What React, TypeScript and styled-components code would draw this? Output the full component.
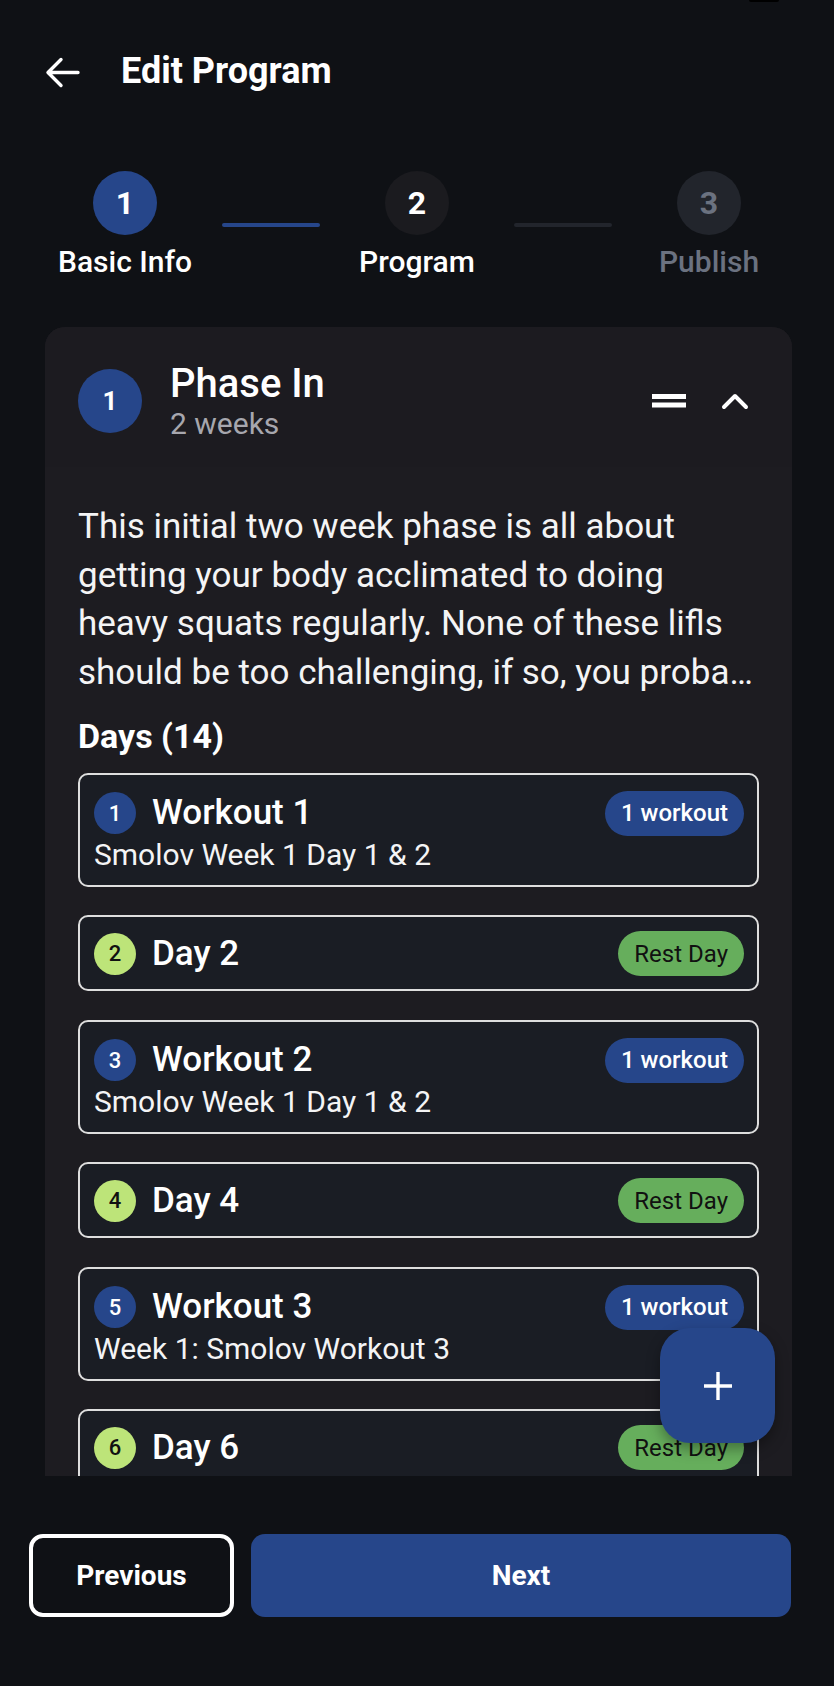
import React from "react";
import styled, { createGlobalStyle } from "styled-components";

const GlobalStyle = createGlobalStyle`
  html, body {
    margin: 0;
    padding: 0;
    background: #0f1115;
  }
  body {
    font-family: Roboto, "Noto Sans", "Liberation Sans", sans-serif;
    color: #ffffff;
  }
  * { box-sizing: border-box; }
`;

const BLUE = "#26468a";

const Screen = styled.div`
  position: relative;
  width: 834px;
  height: 1686px;
  overflow: hidden;
  background: #0f1115;
  display: flex;
  flex-direction: column;
`;

const StatusNotch = styled.div`
  position: absolute;
  top: 0;
  right: 55px;
  width: 30px;
  height: 2px;
  background: #000;
  border-radius: 0 0 2px 2px;
`;

const Header = styled.header`
  height: 142px;
  flex: none;
  display: flex;
  align-items: center;
  padding-left: 45px;
  gap: 41px;
`;

const BackButton = styled.button`
  width: 35px;
  height: 34px;
  padding: 0;
  border: none;
  background: transparent;
  color: #fff;
  display: flex;
  align-items: center;
  justify-content: center;
  margin-top: 2px;
`;

const Title = styled.h1`
  margin: 0;
  font-size: 36px;
  line-height: 42px;
  font-weight: 700;
  color: #fff;
`;

const Stepper = styled.nav`
  flex: none;
  display: flex;
  justify-content: center;
  padding-top: 29px;
`;

const Step = styled.div`
  width: 140px;
  display: flex;
  flex-direction: column;
  align-items: center;
`;

const StepCircle = styled.div<{ $state: "done" | "active" | "todo" }>`
  width: 64px;
  height: 64px;
  border-radius: 50%;
  display: flex;
  align-items: center;
  justify-content: center;
  font-size: 32px;
  font-weight: 700;
  background: ${(p) =>
    p.$state === "done" ? BLUE : p.$state === "active" ? "#1b1b1f" : "#22252c"};
  color: ${(p) => (p.$state === "todo" ? "#6b7280" : "#ffffff")};
`;

const StepLabel = styled.div<{ $muted?: boolean }>`
  margin-top: 10px;
  font-size: 30px;
  line-height: 34px;
  font-weight: 500;
  white-space: nowrap;
  color: ${(p) => (p.$muted ? "#6b7280" : "#ffffff")};
`;

const ConnectorSlot = styled.div`
  width: 152px;
  display: flex;
  justify-content: center;
  padding-top: 52px;
`;

const Connector = styled.div<{ $done?: boolean }>`
  width: 98px;
  height: 4px;
  border-radius: 2px;
  background: ${(p) => (p.$done ? BLUE : "#22252c")};
`;

const Main = styled.main`
  flex: 1;
  min-height: 0;
  overflow: hidden;
  padding: 48px 42px 0 45px;
`;

const PhaseCard = styled.section`
  background: #1c1b20;
  border-radius: 20px 20px 0 0;
`;

const PhaseHeader = styled.div`
  height: 140px;
  display: flex;
  align-items: center;
  padding: 8px 43px 0 33px;
  background: #1c1b20;
  border-radius: 20px 20px 0 0;
`;

const PhaseBadge = styled.div`
  width: 64px;
  height: 64px;
  flex: none;
  border-radius: 50%;
  background: ${BLUE};
  display: flex;
  align-items: center;
  justify-content: center;
  font-size: 26px;
  font-weight: 700;
  color: #fff;
`;

const PhaseText = styled.div`
  flex: 1;
  margin-left: 28px;
  display: flex;
  flex-direction: column;
`;

const PhaseTitle = styled.div`
  font-size: 40px;
  line-height: 45px;
  font-weight: 500;
  color: #fff;
`;

const PhaseSub = styled.div`
  font-size: 30px;
  line-height: 36px;
  color: #a7a7ae;
`;

const IconButton = styled.button`
  border: none;
  background: transparent;
  padding: 0;
  color: #fff;
  display: flex;
  align-items: center;
  justify-content: center;
`;

const PhaseActions = styled.div`
  display: flex;
  align-items: center;
  gap: 35px;
`;

const PhaseBody = styled.div`
  background: #1d1c21;
  padding: 36px 33px 40px 33px;
`;

const Description = styled.p`
  margin: 0;
  font-size: 35px;
  line-height: 48.7px;
  color: #f4f4f5;
`;

const DescHead = styled.span`
  display: block;
`;

const DescTail = styled.span`
  display: block;
  white-space: nowrap;
  overflow: hidden;
  text-overflow: ellipsis;
`;

const DaysLabel = styled.h3`
  margin: 18px 0 17px;
  font-size: 34px;
  line-height: 40px;
  font-weight: 700;
  color: #fff;
`;

const DayList = styled.div`
  display: flex;
  flex-direction: column;
  gap: 28.5px;
`;

const DayItem = styled.div<{ $rest?: boolean }>`
  border: 2px solid #dedede;
  border-radius: 10px;
  background: #1a1d24;
  padding: ${(p) => (p.$rest ? "14px 13px 13px 14px" : "16px 13px 13px 14px")};
`;

const DayRow = styled.div`
  height: 45px;
  display: flex;
  align-items: center;
`;

const DayNumber = styled.div<{ $rest?: boolean }>`
  width: 42px;
  height: 42px;
  flex: none;
  border-radius: 50%;
  display: flex;
  align-items: center;
  justify-content: center;
  font-size: 22px;
  font-weight: 500;
  background: ${(p) => (p.$rest ? "#bde479" : BLUE)};
  color: ${(p) => (p.$rest ? "#111" : "#fff")};
`;

const DayTitle = styled.div`
  flex: 1;
  margin-left: 16px;
  font-size: 35px;
  line-height: 40px;
  font-weight: 500;
  color: #fff;
`;

const Pill = styled.div<{ $rest?: boolean }>`
  height: 45px;
  padding: 0 16px;
  border-radius: 23px;
  display: flex;
  align-items: center;
  font-size: 24px;
  font-weight: ${(p) => (p.$rest ? 400 : 500)};
  background: ${(p) => (p.$rest ? "#66ae5c" : BLUE)};
  color: ${(p) => (p.$rest ? "#111" : "#fff")};
`;

const DaySub = styled.div`
  margin-top: 2px;
  font-size: 30px;
  line-height: 34px;
  color: #f4f4f5;
`;

const Footer = styled.footer`
  flex: none;
  height: 210px;
  display: flex;
  gap: 17px;
  padding: 58px 43px 0 29px;
`;

const FooterButton = styled.button<{ $primary?: boolean }>`
  height: 83px;
  border-radius: 14px;
  font-family: inherit;
  font-size: 28px;
  font-weight: 700;
  color: #fff;
  background: ${(p) => (p.$primary ? BLUE : "transparent")};
  border: ${(p) => (p.$primary ? "none" : "4px solid #ffffff")};
  width: ${(p) => (p.$primary ? "auto" : "205px")};
  flex: ${(p) => (p.$primary ? 1 : "none")};
`;

const Fab = styled.button`
  position: absolute;
  right: 59px;
  bottom: 243px;
  width: 115px;
  height: 115px;
  border-radius: 30px;
  border: none;
  background: ${BLUE};
  color: #fff;
  display: flex;
  align-items: center;
  justify-content: center;
  box-shadow: 0 6px 14px rgba(0, 0, 0, 0.35);
`;

type Day =
  | { n: number; kind: "workout"; title: string; sub: string }
  | { n: number; kind: "rest"; title: string };

const days: Day[] = [
  { n: 1, kind: "workout", title: "Workout 1", sub: "Smolov Week 1 Day 1 & 2" },
  { n: 2, kind: "rest", title: "Day 2" },
  { n: 3, kind: "workout", title: "Workout 2", sub: "Smolov Week 1 Day 1 & 2" },
  { n: 4, kind: "rest", title: "Day 4" },
  { n: 5, kind: "workout", title: "Workout 3", sub: "Week 1: Smolov Workout 3" },
  { n: 6, kind: "rest", title: "Day 6" },
  { n: 7, kind: "workout", title: "Workout 4", sub: "Week 1: Smolov Workout 4" },
  { n: 8, kind: "rest", title: "Day 8" },
];

const ArrowLeft = () => (
  <svg width="35" height="31" viewBox="0 0 35 31" fill="none">
    <path
      d="M33 15.5H3M16 2.5L3 15.5L16 28.5"
      stroke="currentColor"
      strokeWidth="3.4"
      strokeLinecap="round"
      strokeLinejoin="round"
    />
  </svg>
);

const DragHandle = () => (
  <svg width="34" height="14" viewBox="0 0 34 14">
    <rect x="0" y="0" width="34" height="5" fill="currentColor" />
    <rect x="0" y="8.5" width="34" height="5" fill="currentColor" />
  </svg>
);

const ChevronUp = () => (
  <svg width="28" height="18" viewBox="0 0 28 18" fill="none">
    <path
      d="M3 15L14 4L25 15"
      stroke="currentColor"
      strokeWidth="4"
      strokeLinecap="round"
      strokeLinejoin="round"
    />
  </svg>
);

const Plus = () => (
  <svg width="32" height="32" viewBox="0 0 32 32" fill="none">
    <path d="M16 2V30M2 16H30" stroke="currentColor" strokeWidth="3.4" />
  </svg>
);

export default function App() {
  return (
    <>
      <GlobalStyle />
      <Screen>
        <StatusNotch />
        <Header>
          <BackButton aria-label="Back">
            <ArrowLeft />
          </BackButton>
          <Title>Edit Program</Title>
        </Header>

        <Stepper>
          <Step>
            <StepCircle $state="done">1</StepCircle>
            <StepLabel>Basic Info</StepLabel>
          </Step>
          <ConnectorSlot>
            <Connector $done />
          </ConnectorSlot>
          <Step>
            <StepCircle $state="active">2</StepCircle>
            <StepLabel>Program</StepLabel>
          </Step>
          <ConnectorSlot>
            <Connector />
          </ConnectorSlot>
          <Step>
            <StepCircle $state="todo">3</StepCircle>
            <StepLabel $muted>Publish</StepLabel>
          </Step>
        </Stepper>

        <Main>
          <PhaseCard>
            <PhaseHeader>
              <PhaseBadge>1</PhaseBadge>
              <PhaseText>
                <PhaseTitle>Phase In</PhaseTitle>
                <PhaseSub>2 weeks</PhaseSub>
              </PhaseText>
              <PhaseActions>
                <IconButton aria-label="Reorder">
                  <DragHandle />
                </IconButton>
                <IconButton aria-label="Collapse">
                  <ChevronUp />
                </IconButton>
              </PhaseActions>
            </PhaseHeader>
            <PhaseBody>
              <Description>
                <DescHead>
                  This initial two week phase is all about getting your body
                  acclimated to doing heavy squats regularly. None of these lifls
                </DescHead>
                <DescTail>
                  should be too challenging, if so, you probably need to lower
                  your max and start over.
                </DescTail>
              </Description>
              <DaysLabel>Days (14)</DaysLabel>
              <DayList>
                {days.map((d) => (
                  <DayItem key={d.n} $rest={d.kind === "rest"}>
                    <DayRow>
                      <DayNumber $rest={d.kind === "rest"}>{d.n}</DayNumber>
                      <DayTitle>{d.title}</DayTitle>
                      {d.kind === "rest" ? (
                        <Pill $rest>Rest Day</Pill>
                      ) : (
                        <Pill>1 workout</Pill>
                      )}
                    </DayRow>
                    {d.kind === "workout" && <DaySub>{d.sub}</DaySub>}
                  </DayItem>
                ))}
              </DayList>
            </PhaseBody>
          </PhaseCard>
        </Main>

        <Footer>
          <FooterButton>Previous</FooterButton>
          <FooterButton $primary>Next</FooterButton>
        </Footer>

        <Fab aria-label="Add day">
          <Plus />
        </Fab>
      </Screen>
    </>
  );
}
